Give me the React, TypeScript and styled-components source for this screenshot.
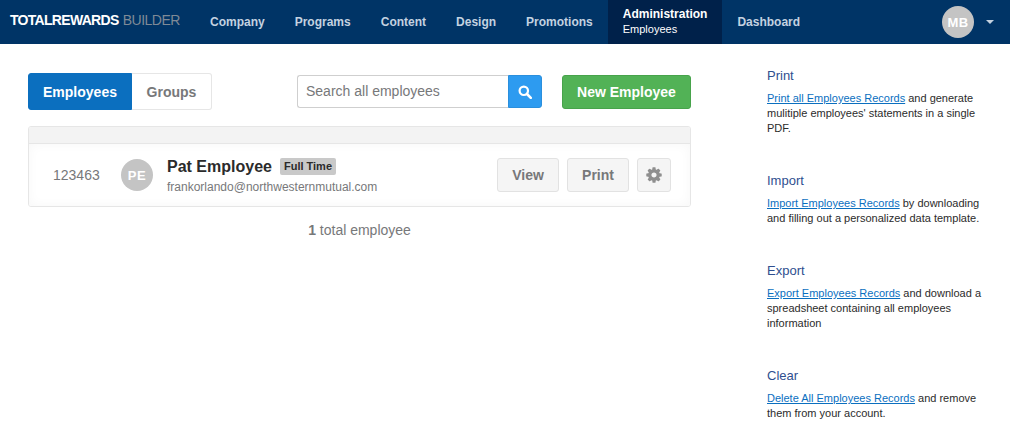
import React from "react";
import styled, { createGlobalStyle } from "styled-components";

const Global = createGlobalStyle`
  html, body { margin: 0; padding: 0; background: #fff; }
  body { font-family: "Liberation Sans", Arial, sans-serif; }
  * { box-sizing: border-box; }
`;

const Page = styled.div`
  width: 1010px;
  height: 437px;
  overflow: hidden;
`;

const TopBar = styled.header`
  height: 44px;
  background: #003466;
  display: flex;
  align-items: stretch;
`;

const Logo = styled.div`
  width: 195px;
  padding-left: 10px;
  font-size: 14px;
  line-height: 41px;
  font-weight: 700;
  letter-spacing: -0.7px;
  color: #fff;
  white-space: nowrap;
  span { font-weight: 400; color: #7f8a96; letter-spacing: -0.5px; margin-left: 1px; }
`;

const NavItem = styled.div<{ $active?: boolean }>`
  padding: 0 15px;
  display: flex;
  flex-direction: column;
  justify-content: center;
  font-size: 12px;
  font-weight: 700;
  line-height: 15px;
  color: ${(p) => (p.$active ? "#fff" : "#c4d2e0")};
  background: ${(p) => (p.$active ? "#00214a" : "transparent")};
  small { font-size: 11px; font-weight: 400; line-height: 15px; }
`;

const NavList = styled.nav`
  display: flex;
  align-items: stretch;
`;

const UserArea = styled.div`
  margin-left: auto;
  display: flex;
  align-items: center;
  padding-right: 16px;
  gap: 12px;
`;

const Avatar = styled.div<{ $size: number; $font: number }>`
  width: ${(p) => p.$size}px;
  height: ${(p) => p.$size}px;
  flex: none;
  border-radius: 50%;
  background: #c4c4c4;
  color: #fff;
  display: flex;
  align-items: center;
  justify-content: center;
  font-size: ${(p) => p.$font}px;
  font-weight: 700;
  letter-spacing: 0.5px;
`;

const Caret = styled.div`
  width: 0;
  height: 0;
  border-left: 4px solid transparent;
  border-right: 4px solid transparent;
  border-top: 4px solid #c4d2e0;
`;

const Body = styled.div`
  display: flex;
  align-items: flex-start;
`;

const Main = styled.main`
  width: 663px;
  margin-left: 28px;
  padding-top: 29px;
`;

const Toolbar = styled.div`
  display: flex;
  align-items: center;
  height: 37px;
`;

const Tab = styled.div<{ $active?: boolean; $width: number }>`
  width: ${(p) => p.$width}px;
  height: 37px;
  display: flex;
  align-items: center;
  justify-content: center;
  font-size: 14px;
  font-weight: 700;
  color: ${(p) => (p.$active ? "#fff" : "#77787a")};
  background: ${(p) => (p.$active ? "#0b6fbf" : "#fff")};
  border: 1px solid ${(p) => (p.$active ? "#0b6fbf" : "#e6e6e6")};
  border-left-width: ${(p) => (p.$active ? 1 : 0)}px;
  border-radius: ${(p) => (p.$active ? "3px 0 0 3px" : "0 3px 3px 0")};
`;

const Search = styled.div`
  margin-left: 85px;
  display: flex;
  height: 33px;
`;

const SearchInput = styled.div`
  width: 211px;
  height: 33px;
  border: 1px solid #cfcfcf;
  border-right: 0;
  border-radius: 3px 0 0 3px;
  padding-left: 8px;
  font-size: 14px;
  line-height: 31px;
  color: #77787a;
`;

const SearchButton = styled.div`
  width: 34px;
  height: 33px;
  background: #2d9bf0;
  border: 1px solid #2a8fdd;
  border-radius: 0 3px 3px 0;
  display: flex;
  align-items: center;
  justify-content: center;
`;

const NewButton = styled.div`
  margin-left: 20px;
  width: 129px;
  height: 34px;
  background: #52b256;
  border: 1px solid #47a34b;
  border-radius: 3px;
  color: #fff;
  font-size: 14px;
  font-weight: 700;
  display: flex;
  align-items: center;
  justify-content: center;
`;

const ListCard = styled.section`
  margin-top: 16px;
  height: 81px;
  border: 1px solid #e6e6e6;
  border-radius: 3px;
  overflow: hidden;
`;

const ListHead = styled.div`
  height: 17px;
  background: #f3f3f3;
  border-bottom: 1px solid #e6e6e6;
`;

const Row = styled.div`
  height: 62px;
  display: flex;
  align-items: center;
  padding-left: 24px;
  padding-right: 19px;
  background: #fff;
  box-shadow: inset 0 0 12px rgba(0, 0, 0, 0.035);
`;

const EmployeeId = styled.div`
  width: 68px;
  font-size: 14px;
  color: #77787a;
`;

const Info = styled.div`
  margin-left: 14px;
  display: flex;
  flex-direction: column;
`;

const NameLine = styled.div`
  display: flex;
  align-items: center;
  height: 20px;
  gap: 8px;
`;

const Name = styled.div`
  font-size: 16px;
  font-weight: 700;
  color: #2b2b2b;
`;

const Badge = styled.div`
  height: 17px;
  padding: 0 4px;
  border-radius: 2px;
  background: #c9c9c9;
  color: #2b2b2b;
  font-size: 11px;
  font-weight: 700;
  line-height: 16px;
`;

const Email = styled.div`
  margin-top: 3px;
  font-size: 12px;
  line-height: 14px;
  color: #77787a;
`;

const Actions = styled.div`
  margin-left: auto;
  display: flex;
  gap: 8px;
`;

const ActionButton = styled.div<{ $width: number }>`
  width: ${(p) => p.$width}px;
  height: 34px;
  background: #f5f5f5;
  border: 1px solid #e2e2e2;
  border-radius: 3px;
  display: flex;
  align-items: center;
  justify-content: center;
  font-size: 14px;
  font-weight: 700;
  color: #77787a;
`;

const Total = styled.div`
  margin-top: 15px;
  text-align: center;
  font-size: 14px;
  color: #77787a;
  b { font-weight: 700; }
`;

const Side = styled.aside`
  margin-left: 76px;
  width: 222px;
  padding-top: 24px;
`;

const SideBlock = styled.div`
  height: 105px;
  &:nth-child(2) { height: 90px; }
`;

const SideTitle = styled.h3`
  margin: 0 0 8px;
  font-size: 13px;
  line-height: 15px;
  font-weight: 400;
  color: #2f4f8f;
`;

const SideText = styled.p`
  margin: 0;
  font-size: 11px;
  line-height: 15px;
  color: #2b2b2b;
  a { color: #0b6fbf; text-decoration: underline; }
`;

const Gear = () => (
  <svg width="18" height="18" viewBox="0 0 1792 1792" fill="#8f8f8f" aria-hidden="true">
    <path d="M1152 896q0-106-75-181t-181-75-181 75-75 181 75 181 181 75 181-75 75-181zm512-109v222q0 12-8 23t-20 13l-185 28q-19 54-39 91 35 50 107 138 10 12 10 25t-9 23q-27 37-99 108t-94 71q-12 0-26-9l-138-108q-44 23-91 38-16 136-29 186-7 28-36 28h-222q-14 0-24.500-8.500t-11.500-21.500l-28-184q-49-16-90-37l-141 107q-10 9-25 9-14 0-25-11-126-114-165-168-7-10-7-23 0-12 8-23 15-21 51-66.500t54-70.500q-27-50-41-99l-183-27q-13-2-21-12.500t-8-23.500v-222q0-12 8-23t19-13l186-28q14-46 39-92-40-57-107-138-10-12-10-24 0-10 9-23 26-36 98.500-107.500t94.500-71.500q13 0 26 10l138 107q44-23 91-38 16-136 29-186 7-28 36-28h222q14 0 24.500 8.500t11.500 21.500l28 184q49 16 90 37l142-107q9-9 24-9 13 0 25 10 129 119 165 170 7 8 7 22 0 12-8 23-15 21-51 66.500t-54 70.500q26 50 41 98l183 28q13 2 21 12.500t8 23.500z" />
  </svg>
);

const SearchIcon = () => (
  <svg width="14" height="14" viewBox="0 0 14 14" fill="none" stroke="#fff" aria-hidden="true">
    <circle cx="5.8" cy="5.8" r="4.2" strokeWidth="2.2" />
    <path d="M9 9l3.800 3.800" strokeWidth="2.600" strokeLinecap="round" />
  </svg>
);

const navItems = ["Company", "Programs", "Content", "Design", "Promotions"];

export default function App() {
  return (
    <Page>
      <Global />
      <TopBar>
        <Logo>
          TOTALREWARDS <span>BUILDER</span>
        </Logo>
        <NavList>
          {navItems.map((n) => (
            <NavItem key={n}>{n}</NavItem>
          ))}
          <NavItem $active>
            Administration
            <small>Employees</small>
          </NavItem>
          <NavItem>Dashboard</NavItem>
        </NavList>
        <UserArea>
          <Avatar $size={32} $font={13}>MB</Avatar>
          <Caret />
        </UserArea>
      </TopBar>
      <Body>
        <Main>
          <Toolbar>
            <Tab $active $width={104}>Employees</Tab>
            <Tab $width={80}>Groups</Tab>
            <Search>
              <SearchInput>Search all employees</SearchInput>
              <SearchButton><SearchIcon /></SearchButton>
            </Search>
            <NewButton>New Employee</NewButton>
          </Toolbar>
          <ListCard>
            <ListHead />
            <Row>
              <EmployeeId>123463</EmployeeId>
              <Avatar $size={32} $font={13}>PE</Avatar>
              <Info>
                <NameLine>
                  <Name>Pat Employee</Name>
                  <Badge>Full Time</Badge>
                </NameLine>
                <Email>frankorlando@northwesternmutual.com</Email>
              </Info>
              <Actions>
                <ActionButton $width={62}>View</ActionButton>
                <ActionButton $width={62}>Print</ActionButton>
                <ActionButton $width={34}><Gear /></ActionButton>
              </Actions>
            </Row>
          </ListCard>
          <Total><b>1</b> total employee</Total>
        </Main>
        <Side>
          <SideBlock>
            <SideTitle>Print</SideTitle>
            <SideText>
              <a href="#print">Print all Employees Records</a> and generate mulitiple employees' statements in a single PDF.
            </SideText>
          </SideBlock>
          <SideBlock>
            <SideTitle>Import</SideTitle>
            <SideText>
              <a href="#import">Import Employees Records</a> by downloading and filling out a personalized data template.
            </SideText>
          </SideBlock>
          <SideBlock>
            <SideTitle>Export</SideTitle>
            <SideText>
              <a href="#export">Export Employees Records</a> and download a spreadsheet containing all employees information
            </SideText>
          </SideBlock>
          <SideBlock>
            <SideTitle>Clear</SideTitle>
            <SideText>
              <a href="#clear">Delete All Employees Records</a> and remove them from your account.
            </SideText>
          </SideBlock>
        </Side>
      </Body>
    </Page>
  );
}
